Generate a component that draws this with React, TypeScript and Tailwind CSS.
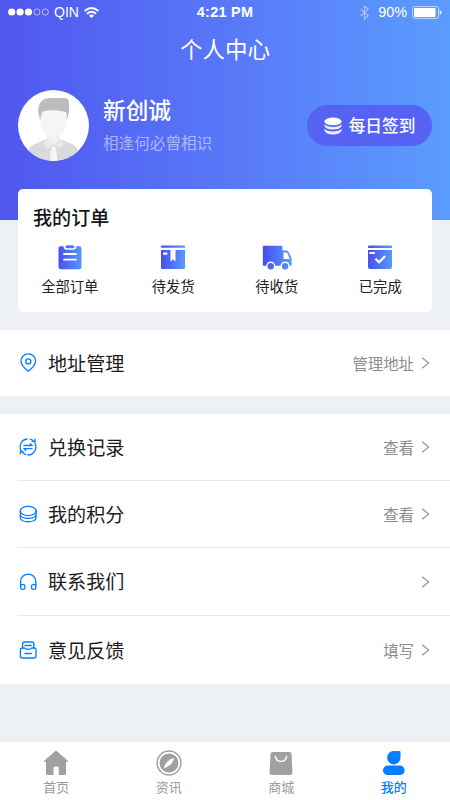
import type { ReactNode } from 'react';

function StatusBar() {
  return (
    <div className="grid h-6 grid-cols-[1fr_auto_1fr] items-center pl-2 pr-[8px] font-['Liberation_Sans',sans-serif] text-[14px] leading-6 text-white">
      <div className="flex items-center">
        <svg className="h-2 w-[42px]" viewBox="0 0 42 8">
          <circle cx="3.7" cy="4" r="3.6" fill="#fff" />
          <circle cx="12.1" cy="4" r="3.6" fill="#fff" />
          <circle cx="20.5" cy="4" r="3.6" fill="#fff" />
          <circle cx="28.9" cy="4" r="3.1" fill="none" stroke="#fff" strokeOpacity=".75" strokeWidth=".8" />
          <circle cx="37.3" cy="4" r="3.1" fill="none" stroke="#fff" strokeOpacity=".75" strokeWidth=".8" />
        </svg>
        <span className="ml-[4px] w-[25px]">QIN</span>
        <svg className="ml-[5px] h-[11px] w-[15px]" viewBox="0 0 15 11" fill="none" stroke="#fff" strokeWidth="1.8">
          <path d="M.6 4Q7.5-2 14.4 4" />
          <path d="M3 6.7Q7.5 2.9 12 6.7" />
          <path d="M4.9 8.7Q7.5 6.5 10.1 8.7L7.5 11Z" fill="#fff" stroke="none" />
        </svg>
      </div>
      <span className="text-[14.4px] font-bold tracking-[0.3px]">4:21 PM</span>
      <div className="flex items-center justify-end">
        <svg className="mr-[9px] h-[15px] w-[9px] opacity-50" viewBox="0 0 9 15" fill="none" stroke="#fff" strokeWidth="1.1">
          <path d="M.6 4L8.3 10.8L4.5 14V1L8.3 4.2L.6 11" />
        </svg>
        <span className="text-[14.4px]">90%</span>
        <svg className="ml-[5px] h-[13px] w-[30px]" viewBox="0 0 30 13">
          <rect x=".6" y=".6" width="26" height="11.8" rx="2" fill="none" stroke="#fff" strokeOpacity=".6" strokeWidth="1" />
          <rect x="2" y="2" width="21.5" height="9" rx=".7" fill="#fff" />
          <path d="M27.8 4.2Q29.6 5 29.6 6.5T27.8 8.8Z" fill="#fff" />
        </svg>
      </div>
    </div>
  );
}

function Avatar() {
  return (
    <svg className="h-[71px] w-[71px] shrink-0" viewBox="0 0 71 71">
      <defs>
        <clipPath id="avatarClip"><circle cx="35.5" cy="35.5" r="35.5" /></clipPath>
      </defs>
      <circle cx="35.5" cy="35.5" r="35.5" fill="#fff" />
      <g clipPath="url(#avatarClip)">
        <path d="M11 71V60Q11 56 17 54L29 49H42L54 54Q60 57 60 62V71Z" fill="#dadada" />
        <path d="M29 49L35.5 55L42 49V42H29Z" fill="#f1f1f1" />
        <path d="M28.5 49L25 54L30 59L35.5 54L41 59L46 54L42.5 49L35.5 54Z" fill="#e9e9e9" />
        <path d="M33 58L35.5 55.5L38 58L39.5 71H32Z" fill="#f5f5f5" />
        <path d="M22.5 24Q35 17 48.5 24V33Q47.5 46.5 35.5 46.5T22.5 33Z" fill="#f5f5f5" />
        <path d="M22.3 31L20.2 22Q20 9 31 8H46Q51 8 51 13V22L48.7 31V24Q48 21.3 44 21.3Q35 19 25 21.5Q22.8 23 22.3 31Z" fill="#bcbcbc" />
      </g>
    </svg>
  );
}

function CoinsFilled() {
  return (
    <svg className="h-[18px] w-[18px]" viewBox="0 0 18 18" fill="#fff">
      <ellipse cx="9" cy="4.4" rx="8.6" ry="3.9" />
      <path d="M.4 7.3Q3 10 9 10T17.6 7.3V9Q16 12.6 9 12.6T.4 9Z" fillOpacity=".9" />
      <path d="M.4 11.8Q3 14.4 9 14.4T17.6 11.8V13.5Q16 17.4 9 17.4T.4 13.5Z" fillOpacity=".9" />
    </svg>
  );
}

function OrderIcon({ kind }: { kind: string }) {
  const fill = `url(#${kind}Fill)`;
  return (
    <svg className="h-[25px] w-[30px]" viewBox="0 0 30 25">
      <defs>
        <linearGradient id={`${kind}Fill`} gradientUnits="userSpaceOnUse" x1="3" x2="27" y1="0" y2="0">
          <stop offset="0" stopColor="#4850ed" />
          <stop offset="1" stopColor="#559aff" />
        </linearGradient>
      </defs>
      {kind === 'all' && (
        <>
          <path d="M5.5 1.3H8.6Q8.6 4.7 11.5 4.7H18.5Q21.4 4.7 21.4 1.3H24.5Q26.5 1.3 26.5 3.3V22.3Q26.5 24.3 24.5 24.3H5.5Q3.5 24.3 3.5 22.3V3.3Q3.5 1.3 5.5 1.3Z" fill={fill} />
          <path d="M10.3 1.3Q11.6 1.1 12 .2H18Q18.4 1.1 19.7 1.3Q19.7 3.3 18 3.3H12Q10.3 3.3 10.3 1.3Z" fill={fill} />
          <path d="M9 9H21M9 14.6H21" stroke="#fff" strokeWidth="1.9" strokeLinecap="round" />
        </>
      )}
      {kind === 'ship' && (
        <>
          <rect x="3" y=".6" width="24" height="2.2" rx=".9" fill={fill} />
          <path d="M3 5H12.5V16.5L15 14.3L17.5 16.5V5H27V22.7Q27 24 25.5 24H4.5Q3 24 3 22.7Z" fill={fill} />
          <rect x="5" y="7.6" width="4.4" height="2.1" rx=".6" fill="#fff" />
        </>
      )}
      {kind === 'receive' && (
        <>
          <path d="M1.4.7H19.4Q20.4.7 20.4 1.7V5.4H24.5Q25.7 5.4 26.5 6.7L29 11.7Q29.7 13 29.7 14.2V19.7Q29.7 20.7 28.7 20.7H1.8Q.8 20.7.8 19.7V1.7Q.8.7 1.4.7Z" fill={fill} />
          <path d="M21.5 7.5H25L27.7 14H21.5Z" fill="#fff" />
          <circle cx="8.7" cy="21" r="4.5" fill="#fff" />
          <circle cx="23.1" cy="21" r="4.5" fill="#fff" />
          <circle cx="8.7" cy="21.2" r="3.2" fill="#4e64f4" />
          <circle cx="23.1" cy="21.2" r="3.2" fill="#5385fb" />
        </>
      )}
      {kind === 'done' && (
        <>
          <path d="M3 3V2Q3 .6 4.5.6H25.5Q27 .6 27 2V3Z" fill={fill} />
          <path d="M3 5H27V22Q27 24 25 24H5Q3 24 3 22Z" fill={fill} />
          <rect x="4.3" y="7" width="5.8" height="2.1" rx=".8" fill="#fff" />
          <path d="M10.5 13.8L14 17.3L20.2 11.1" fill="none" stroke="#fff" strokeWidth="2.2" />
        </>
      )}
    </svg>
  );
}

function MenuIcon({ kind }: { kind: string }) {
  return (
    <svg className="h-5 w-5" viewBox="0 0 20 20" fill="none" stroke="#087dff" strokeWidth="1.35" strokeLinejoin="round" strokeLinecap="round">
      {kind === 'pin' && (
        <>
          <path d="M10.3 18.3Q3 12.3 3 8.2A7.3 7.3 0 0 1 17.6 8.2Q17.6 12.3 10.3 18.3Z" />
          <circle cx="10.3" cy="8.4" r="2.5" />
        </>
      )}
      {kind === 'exchange' && (
        <>
          <path d="M3.4 14.2A8 8 0 0 1 9 2M12.2 2.2Q14.5 2.8 16 4.8M14 4.4L17.2 4.6L17 2.2M16.9 6.2A8 8 0 0 1 10 18M7.7 17.6Q5 16.7 3.4 14.2M2.2 16.8L2.5 14L5 15" />
          <path d="M6 8.5H14.2L12.2 6.8M14 11.6H5.8L7.8 13.4" />
        </>
      )}
      {kind === 'coins' && (
        <>
          <ellipse cx="10.2" cy="7" rx="7.9" ry="4.6" />
          <path d="M2.3 7V10.2C2.3 15.8 18.1 15.8 18.1 10.2V7M2.3 10V13.4C2.3 19.2 18.1 19.2 18.1 13.4V10" />
        </>
      )}
      {kind === 'headset' && (
        <>
          <path d="M2.6 13.2V9.3A7.6 7.2 0 0 1 17.8 9.3V13.2" />
          <path d="M2.6 12.6H5.4Q6.9 12.6 6.9 14V15.7Q6.9 17.4 5.4 17.4H4.1Q2.6 17.4 2.6 15.7ZM17.8 12.6H15Q13.5 12.6 13.5 14V15.7Q13.5 17.4 15 17.4H16.3Q17.8 17.4 17.8 15.7Z" />
        </>
      )}
      {kind === 'feedback' && (
        <>
          <path d="M4.6 8V4Q4.6 2 6.6 2H13.8Q15.8 2 15.8 4V8" />
          <path d="M4.2 8H6.6Q10.2 10.8 13.8 8H16.2Q18 8.1 18 10V16Q18 18 16 18H4.4Q2.4 18 2.4 16V10Q2.4 8.1 4.2 8Z" />
          <path d="M7 5.5H13.3M7 13.5H13.4" />
        </>
      )}
    </svg>
  );
}

function MenuRow({ icon, label, action, height, divider }: { icon: string; label: string; action?: string; height: string; divider?: boolean }) {
  return (
    <div className={`ml-[18px] flex items-center pr-[20px] ${height} ${divider ? 'border-b border-[#e8e8ea]' : ''}`}>
      <MenuIcon kind={icon} />
      <span className="ml-[10px] pb-px text-[19.1px] leading-7 text-[#1c1c1c]">{label}</span>
      <span className="ml-auto pb-px text-[15.4px] leading-6 text-[#8c8c8c]">{action}</span>
      <svg className="ml-[7px] h-3 w-[9px]" viewBox="0 0 9 12" fill="none" stroke="#929292" strokeWidth="1.15">
        <path d="M1.2.7L7.6 6L1.2 11.3" />
      </svg>
    </div>
  );
}

function TabIcon({ kind }: { kind: string }) {
  return (
    <svg className="h-[26px] w-[26px]" viewBox="0 0 26 26">
      {kind === 'home' && (
        <path d="M13 .8Q13.6.8 14.2 1.4L24.5 10.5Q25.6 11.8 24.2 12H23V23.4Q23 25 21.4 25H15.8V18.5Q15.8 16.3 13 16.3T10.5 18.5V25H4.6Q3 25 3 23.4V12H1.8Q.4 11.8 1.5 10.5L11.8 1.4Q12.4.8 13 .8Z" fill="#a0a0a0" />
      )}
      {kind === 'news' && (
        <>
          <circle cx="13" cy="13" r="11.9" fill="none" stroke="#a0a0a0" strokeWidth="1.5" />
          <circle cx="13" cy="13" r="9.5" fill="#a0a0a0" />
          <path d="M18.2 7.7Q17.3 12 14.5 14.6T7.8 18.3Q8.7 14 11.5 11.4T18.2 7.7Z" fill="#fff" />
        </>
      )}
      {kind === 'shop' && (
        <>
          <path d="M4.5 2H21.5Q23.3 2 23.5 4L24.4 22Q24.5 25 22 25H4Q1.5 25 1.6 22L2.5 4Q2.7 2 4.5 2Z" fill="#a0a0a0" />
          <path d="M7.3 6.4Q8.3 11.5 13 11.5T18.7 6.4" fill="none" stroke="#fff" strokeWidth="1.5" strokeLinecap="round" />
        </>
      )}
      {kind === 'mine' && (
        <>
          <path d="M12.6 1H18.5Q19.5 1 19.5 2V7.6A6.7 6.7 0 1 1 12.6 1Z" fill="#087dff" />
          <rect x="2" y="15.6" width="21.6" height="9.5" rx="4.7" fill="#087dff" />
        </>
      )}
    </svg>
  );
}

const orders = [
  { kind: 'all', label: '全部订单' },
  { kind: 'ship', label: '待发货' },
  { kind: 'receive', label: '待收货' },
  { kind: 'done', label: '已完成' },
];

const tabs = [
  { kind: 'home', label: '首页' },
  { kind: 'news', label: '资讯' },
  { kind: 'shop', label: '商城' },
  { kind: 'mine', label: '我的', active: true },
];

function Panel({ children }: { children: ReactNode }) {
  return <section className="bg-white">{children}</section>;
}

export default function App() {
  return (
    <div className="flex h-[800px] w-[450px] flex-col overflow-hidden bg-[#edf0f5] font-['Noto_Sans_CJK_SC',sans-serif]">
      <header className="h-[220px] shrink-0 bg-linear-to-r from-[#5056ef] via-[#5877f8] to-[#5b9cff]">
        <StatusBar />
        <h1 className="mt-[8px] h-8 text-center text-[22.5px] leading-8 text-white">个人中心</h1>
        <div className="mt-[26px] flex h-[71px] items-center px-[18px]">
          <Avatar />
          <div className="ml-[14px] pt-px">
            <div className="text-[22.7px] font-medium leading-8 text-white">新创诚</div>
            <div className="text-[15.6px] leading-8 text-white/50">相逢何必曾相识</div>
          </div>
          <button className="ml-auto flex h-[41px] w-[125px] items-center justify-center gap-[7px] rounded-full bg-[#5562f2] text-[16.7px] font-medium text-white">
            <CoinsFilled />
            <span className="pb-px leading-6">每日签到</span>
          </button>
        </div>
      </header>
      <section className="z-10 mx-[18px] -mt-[31px] h-[123px] shrink-0 rounded-[5px] bg-white pt-[14px]">
        <h2 className="ml-[15px] text-[19.1px] font-medium leading-7 text-[#151515]">我的订单</h2>
        <div className="mt-[14px] grid grid-cols-4">
          {orders.map((o) => (
            <div key={o.kind} className="flex flex-col items-center">
              <OrderIcon kind={o.kind} />
              <span className="mt-[6px] text-[14.3px] leading-5 text-[#222]">{o.label}</span>
            </div>
          ))}
        </div>
      </section>
      <main className="mt-[18px] flex flex-col gap-[18px]">
        <Panel>
          <MenuRow icon="pin" label="地址管理" action="管理地址" height="h-[66px]" />
        </Panel>
        <Panel>
          <MenuRow icon="exchange" label="兑换记录" action="查看" height="h-[67px]" divider />
          <MenuRow icon="coins" label="我的积分" action="查看" height="h-[67px]" divider />
          <MenuRow icon="headset" label="联系我们" height="h-[68px]" divider />
          <MenuRow icon="feedback" label="意见反馈" action="填写" height="h-[68px]" />
        </Panel>
      </main>
      <nav className="mt-auto grid h-[58px] shrink-0 grid-cols-4 bg-white pt-2">
        {tabs.map((t) => (
          <div key={t.kind} className={`flex flex-col items-center ${t.active ? 'font-medium text-[#087dff]' : 'text-[#999]'}`}>
            <TabIcon kind={t.kind} />
            <span className="mt-[2px] text-[13px] leading-[18px]">{t.label}</span>
          </div>
        ))}
      </nav>
    </div>
  );
}
